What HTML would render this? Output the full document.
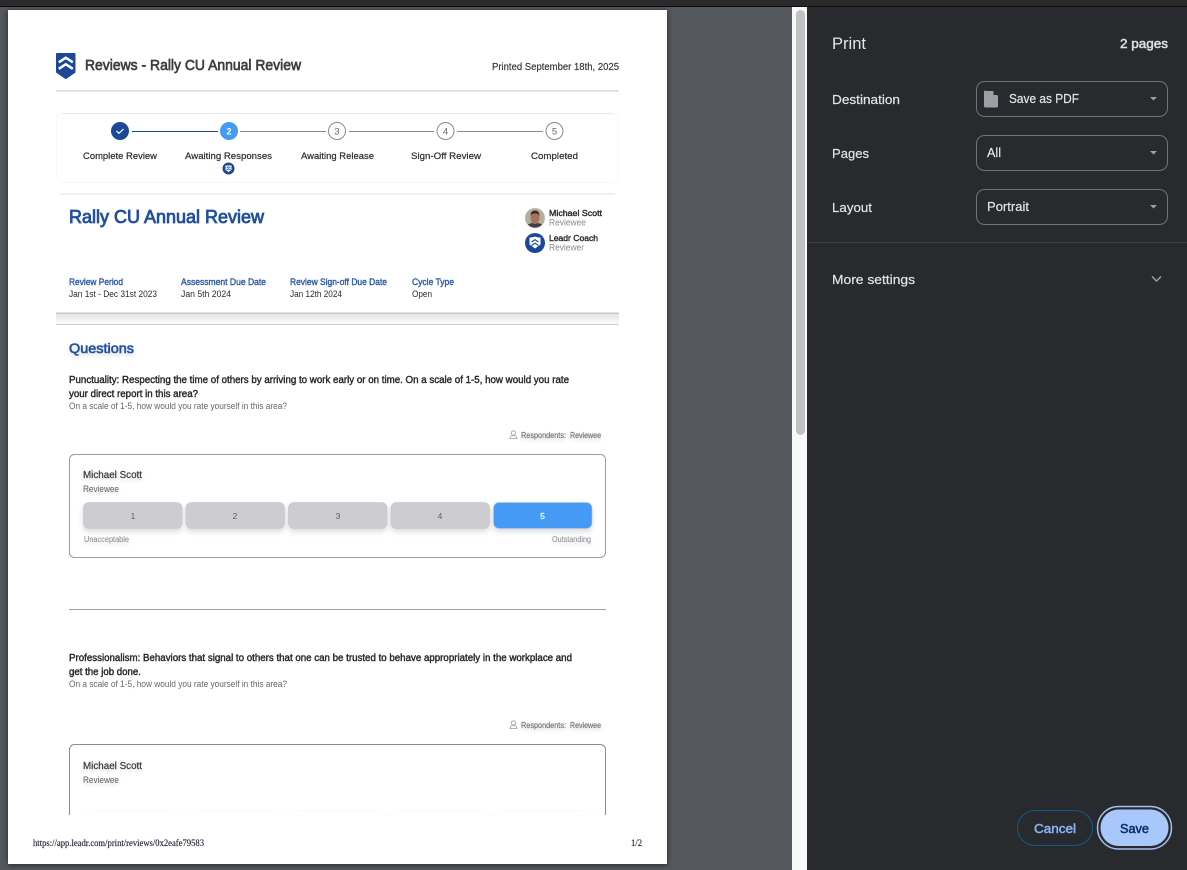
<!DOCTYPE html>
<html lang="en">
<head>
<meta charset="utf-8">
<title>Print - Rally CU Annual Review</title>
<style>
html,body{margin:0;padding:0;width:1187px;height:870px;overflow:hidden;background:#54575c}
svg{display:block}
text{font-family:"Liberation Sans",sans-serif;white-space:pre}
.s{filter:url(#ts)}
.ui{fill:#e3e4e6;stroke:#e3e4e6;stroke-width:.2;font-size:13px}
</style>
</head>
<body>
<svg xmlns="http://www.w3.org/2000/svg" width="1187" height="870" viewBox="0 0 1187 870">
<defs>
<filter id="pg" x="-5%" y="-5%" width="110%" height="110%"><feDropShadow dx="0" dy="1" stdDeviation="3" flood-color="#000" flood-opacity=".55"/></filter>
<filter id="ts" x="-10%" y="-60%" width="120%" height="240%"><feDropShadow dx="0" dy="2" stdDeviation="2.200" flood-color="#000" flood-opacity=".16"/></filter>
<filter id="bs" x="-10%" y="-30%" width="120%" height="170%"><feDropShadow dx="0" dy="3" stdDeviation="3" flood-color="#000" flood-opacity=".14"/></filter>
<filter id="soft" x="0" y="0" width="100%" height="100%"><feGaussianBlur stdDeviation=".28"/></filter>
<linearGradient id="band" x1="0" y1="0" x2="0" y2="1"><stop offset="0" stop-color="#e2e2e4"/><stop offset="1" stop-color="#fbfbfb"/></linearGradient>
<clipPath id="pc"><rect x="8" y="10" width="659" height="805"/></clipPath>
<clipPath id="av"><circle cx="535" cy="218" r="10"/></clipPath>
</defs>

<!-- window chrome -->
<rect width="1187" height="870" fill="#54575c"/>
<rect width="1187" height="6" fill="#2a2a2b"/>
<rect y="6" width="1187" height="1" fill="#0c0c0d"/>

<!-- paper -->
<rect x="8" y="10" width="659" height="854" fill="#fff" filter="url(#pg)"/>

<!-- scrollbar -->
<rect x="792" y="7" width="15" height="863" fill="#f8f8f8"/>
<rect x="796" y="10" width="9" height="425" rx="4.500" fill="#c1c1c1"/>

<!-- sidebar -->
<rect x="807" y="7" width="380" height="863" fill="#292a2d"/>
<text x="832" y="49" font-size="16.500" fill="#e3e4e6" textLength="34" lengthAdjust="spacingAndGlyphs">Print</text>
<text x="1120" y="48" font-size="13" fill="#dfe0e2" stroke="#dfe0e2" stroke-width=".5" textLength="48" lengthAdjust="spacingAndGlyphs">2 pages</text>
<text x="832" y="104" class="ui" textLength="68" lengthAdjust="spacingAndGlyphs">Destination</text>
<text x="832" y="158" class="ui" textLength="37" lengthAdjust="spacingAndGlyphs">Pages</text>
<text x="832" y="212" class="ui" textLength="40" lengthAdjust="spacingAndGlyphs">Layout</text>
<g fill="none" stroke="#6f7276">
<rect x="976.500" y="81.500" width="191" height="35" rx="8"/>
<rect x="976.500" y="135.500" width="191" height="35" rx="8"/>
<rect x="976.500" y="189.500" width="191" height="35" rx="8"/>
</g>
<path d="M986 91h7l5 5v10a1.500 1.500 0 0 1-1.500 1.500h-11a1.500 1.500 0 0 1-1.500-1.500v-14a1.500 1.500 0 0 1 1.500-1.500z" fill="#9aa0a6"/>
<path d="M993.500 90.500v4.500h4.500z" fill="#292a2d"/>
<text x="1009" y="103" class="ui" textLength="70" lengthAdjust="spacingAndGlyphs">Save as PDF</text>
<text x="987" y="157" class="ui" textLength="14" lengthAdjust="spacingAndGlyphs">All</text>
<text x="987" y="211" class="ui" textLength="42" lengthAdjust="spacingAndGlyphs">Portrait</text>
<g fill="#9aa0a6">
<path d="M1150 97h7l-3.500 3.500z"/>
<path d="M1150 151h7l-3.500 3.500z"/>
<path d="M1150 205h7l-3.500 3.500z"/>
</g>
<rect x="807" y="242" width="380" height="1" fill="#3c3e41"/>
<text x="832" y="284" class="ui" textLength="83" lengthAdjust="spacingAndGlyphs">More settings</text>
<path d="M1152 276.500l4.500 4.500 4.500-4.500" fill="none" stroke="#9aa0a6" stroke-width="1.500"/>

<!-- buttons -->
<rect x="1017.500" y="810.500" width="75" height="35" rx="17.500" fill="none" stroke="#0b5c8c"/>
<text x="1034" y="833" font-size="13" fill="#8ab4f8" stroke="#8ab4f8" stroke-width=".5" textLength="42" lengthAdjust="spacingAndGlyphs">Cancel</text>
<rect x="1097.500" y="806.500" width="74" height="42.500" rx="21" fill="#292a2d" stroke="#a0c0f0" stroke-width="1.500"/>
<rect x="1100.500" y="809.500" width="68" height="36.500" rx="18" fill="#a8c7fa"/>
<text x="1120" y="833" font-size="13" fill="#0b2e68" stroke="#0b2e68" stroke-width=".5" textLength="29" lengthAdjust="spacingAndGlyphs">Save</text>

<!-- page content -->
<g clip-path="url(#pc)"><g filter="url(#soft)">
<!-- header -->
<path d="M57 53h17.500a1 1 0 0 1 1 1v18.500l-9.700 6.700-9.800-6.700v-18.500a1 1 0 0 1 1-1z" fill="#1f4a97"/>
<path d="M58.800 62.300l7-4.600 7 4.600M58.800 68.800l7-4.600 7 4.600" fill="none" stroke="#fff" stroke-width="2.500"/>
<text x="85" y="70" font-size="14.500" fill="#3d3d40" stroke="#3d3d40" stroke-width=".65" textLength="216" lengthAdjust="spacingAndGlyphs">Reviews - Rally CU Annual Review</text>
<text x="492" y="70" font-size="10" fill="#333" stroke="#333" stroke-width=".15" textLength="127" lengthAdjust="spacingAndGlyphs">Printed September 18th, 2025</text>
<rect x="56" y="90" width="563" height="1.500" fill="#d9d9d9"/>

<!-- stepper -->
<rect x="56.500" y="113.500" width="562" height="69" rx="6" fill="#fff" stroke="#f8f8f8"/>
<rect x="62" y="113" width="551" height="1" fill="#e9e9e9"/>
<rect x="132" y="131" width="86" height="1" fill="#1f4a97"/>
<rect x="240" y="131" width="86" height="1" fill="#888"/>
<rect x="349" y="131" width="85" height="1" fill="#888"/>
<rect x="457" y="131" width="86" height="1" fill="#888"/>
<circle cx="120" cy="131" r="9" fill="#1f4a97"/>
<path d="M116.500 131l2.500 2.300 4.500-4.300" fill="none" stroke="#fff" stroke-width="1.200"/>
<circle cx="229" cy="131" r="9" fill="#459af5"/>
<text x="229" y="134.500" font-size="9" font-weight="bold" fill="#fff" text-anchor="middle">2</text>
<g fill="#fff" stroke="#8b8b8b" stroke-width="1">
<circle cx="337" cy="131" r="8.500"/>
<circle cx="445.500" cy="131" r="8.500"/>
<circle cx="554.500" cy="131" r="8.500"/>
</g>
<g font-size="9.500" fill="#666" text-anchor="middle">
<text x="337" y="134.500">3</text>
<text x="445.500" y="134.500">4</text>
<text x="554.500" y="134.500">5</text>
</g>
<g font-size="9.500" fill="#2e2e30" stroke="#2e2e30" stroke-width=".22">
<text x="83" y="159" textLength="74" lengthAdjust="spacingAndGlyphs">Complete Review</text>
<text x="185" y="159" textLength="87" lengthAdjust="spacingAndGlyphs">Awaiting Responses</text>
<text x="301" y="159" textLength="73" lengthAdjust="spacingAndGlyphs">Awaiting Release</text>
<text x="411" y="159" textLength="70" lengthAdjust="spacingAndGlyphs">Sign-Off Review</text>
<text x="531" y="159" textLength="47" lengthAdjust="spacingAndGlyphs">Completed</text>
</g>
<circle cx="228.500" cy="168.500" r="6" fill="#1f4a97"/>
<path d="M225.500 165.500h6v4.500l-3 2-3-2z" fill="#fff"/>
<path d="M226.500 168l2-1.300 2 1.300M226.500 170l2-1.300 2 1.300" fill="none" stroke="#1f4a97" stroke-width=".8"/>

<!-- review card -->
<rect x="56" y="313" width="563" height="11" fill="url(#band)"/>
<rect x="56" y="324" width="563" height="1" fill="#cfcfd2"/>
<rect x="60" y="193.500" width="555" height="1" fill="#e3e3e3"/>
<rect x="56" y="312.500" width="563" height="1.200" fill="#bfc0c5"/>
<text x="69" y="223" font-size="18.500" fill="#24509f" stroke="#24509f" stroke-width=".85" textLength="195" lengthAdjust="spacingAndGlyphs">Rally CU Annual Review</text>

<g clip-path="url(#av)">
<rect x="525" y="208" width="20" height="20" fill="#b4ae9f"/>
<path d="M525 230c1-6 5-7 10-7s9 1 10 7z" fill="#3c4148"/>
<ellipse cx="535" cy="218" rx="4.500" ry="6" fill="#a8715a"/>
<path d="M530.500 216c0-4 2-5.500 4.500-5.500s4.500 1.500 4.500 5.500c-1-2-2-2.500-4.500-2.500s-3.500.5-4.500 2.500z" fill="#3a2c25"/>
</g>
<circle cx="535" cy="218" r="10" fill="none" stroke="#ddd" stroke-width=".6"/>
<circle cx="535" cy="243" r="10" fill="#1f4a97"/>
<path d="M529.500 237.500c3.500 0 5.500-1 5.500-1s2 1 5.500 1v7l-5.500 4-5.500-4z" fill="#fff"/>
<path d="M531.500 242l3.500-2.300 3.500 2.300M531.500 245.500l3.500-2.300 3.500 2.300" fill="none" stroke="#1f4a97" stroke-width="1.100"/>
<text x="549" y="216" font-size="8.500" fill="#2c2c2e" stroke="#2c2c2e" stroke-width=".4" textLength="53" lengthAdjust="spacingAndGlyphs">Michael Scott</text>
<text x="549" y="225.500" font-size="9" fill="#8b8b90" textLength="37" lengthAdjust="spacingAndGlyphs">Reviewee</text>
<text x="549" y="241" font-size="8.500" fill="#2c2c2e" stroke="#2c2c2e" stroke-width=".4" textLength="49" lengthAdjust="spacingAndGlyphs">Leadr Coach</text>
<text x="549" y="250.500" font-size="9" fill="#8b8b90" textLength="35" lengthAdjust="spacingAndGlyphs">Reviewer</text>

<g font-size="8.800" fill="#2f5cab" stroke="#2f5cab" stroke-width=".38">
<text x="69" y="285" textLength="54" lengthAdjust="spacingAndGlyphs">Review Period</text>
<text x="181" y="285" textLength="85" lengthAdjust="spacingAndGlyphs">Assessment Due Date</text>
<text x="290" y="285" textLength="97" lengthAdjust="spacingAndGlyphs">Review Sign-off Due Date</text>
<text x="412" y="285" textLength="42" lengthAdjust="spacingAndGlyphs">Cycle Type</text>
</g>
<g font-size="9" fill="#2b2b2b">
<text x="69" y="297" textLength="88" lengthAdjust="spacingAndGlyphs">Jan 1st - Dec 31st 2023</text>
<text x="181" y="297" textLength="50" lengthAdjust="spacingAndGlyphs">Jan 5th 2024</text>
<text x="290" y="297" textLength="52" lengthAdjust="spacingAndGlyphs">Jan 12th 2024</text>
<text x="412" y="297" textLength="20" lengthAdjust="spacingAndGlyphs">Open</text>
</g>

<!-- questions -->
<text x="69" y="353" font-size="14" fill="#24509f" stroke="#24509f" stroke-width=".6" class="s" textLength="65" lengthAdjust="spacingAndGlyphs">Questions</text>

<!-- q1 -->
<g font-size="10" fill="#2a2a2c" stroke="#2a2a2c" stroke-width=".42">
<text x="69" y="383" textLength="500" lengthAdjust="spacingAndGlyphs">Punctuality: Respecting the time of others by arriving to work early or on time. On a scale of 1-5, how would you rate</text>
<text x="69" y="397" textLength="129" lengthAdjust="spacingAndGlyphs">your direct report in this area?</text>
</g>
<text x="69" y="409" font-size="9" fill="#666" textLength="218" lengthAdjust="spacingAndGlyphs">On a scale of 1-5, how would you rate yourself in this area?</text>

<circle cx="513.500" cy="433" r="2.200" fill="none" stroke="#9a9aa0" stroke-width=".8"/>
<path d="M510 438.500c0-2.500 1.500-3 3.500-3s3.500.5 3.500 3z" fill="none" stroke="#9a9aa0" stroke-width=".8"/>
<g font-size="8" fill="#77777c" stroke="#77777c" stroke-width=".2" class="s">
<text x="521" y="438" textLength="45" lengthAdjust="spacingAndGlyphs">Respondents:</text>
<text x="570" y="438" textLength="31" lengthAdjust="spacingAndGlyphs">Reviewee</text>
</g>

<rect x="69.500" y="454.500" width="536" height="103" rx="5" fill="#fff" stroke="#9a9ab0"/>
<text x="83" y="478" font-size="10" fill="#38383b" stroke="#38383b" stroke-width=".2" class="s" textLength="59" lengthAdjust="spacingAndGlyphs">Michael Scott</text>
<text x="83" y="492" font-size="9" fill="#5f5f64" class="s" textLength="36" lengthAdjust="spacingAndGlyphs">Reviewee</text>
<g fill="#cdcdd1" stroke="#c2c2c7" stroke-width=".6" filter="url(#bs)">
<rect x="83.500" y="502.500" width="98.500" height="26" rx="5.500"/>
<rect x="186" y="502.500" width="98.500" height="26" rx="5.500"/>
<rect x="288.500" y="502.500" width="98.500" height="26" rx="5.500"/>
<rect x="391" y="502.500" width="98.500" height="26" rx="5.500"/>
<rect x="493.500" y="502.500" width="98.500" height="26" rx="5.500" fill="#459af5"/>
</g>
<g font-size="8.500" fill="#5f5f64" text-anchor="middle">
<text x="133" y="519">1</text>
<text x="235" y="519">2</text>
<text x="338" y="519">3</text>
<text x="440" y="519">4</text>
<text x="542.500" y="519" fill="#fff" stroke="#fff" stroke-width=".25">5</text>
</g>
<text x="84" y="542" font-size="8" fill="#86868c" class="s" textLength="45" lengthAdjust="spacingAndGlyphs">Unacceptable</text>
<text x="552" y="542" font-size="8" fill="#86868c" class="s" textLength="39" lengthAdjust="spacingAndGlyphs">Outstanding</text>

<rect x="69" y="609" width="537" height="1" fill="#a0a0a3"/>

<!-- q2 -->
<g font-size="10" fill="#2a2a2c" stroke="#2a2a2c" stroke-width=".42">
<text x="69" y="661" textLength="503" lengthAdjust="spacingAndGlyphs">Professionalism: Behaviors that signal to others that one can be trusted to behave appropriately in the workplace and</text>
<text x="69" y="675" textLength="72" lengthAdjust="spacingAndGlyphs">get the job done.</text>
</g>
<text x="69" y="687" font-size="9" fill="#666" textLength="218" lengthAdjust="spacingAndGlyphs">On a scale of 1-5, how would you rate yourself in this area?</text>

<circle cx="513.500" cy="723" r="2.200" fill="none" stroke="#9a9aa0" stroke-width=".8"/>
<path d="M510 728.500c0-2.500 1.500-3 3.500-3s3.500.5 3.500 3z" fill="none" stroke="#9a9aa0" stroke-width=".8"/>
<g font-size="8" fill="#77777c" stroke="#77777c" stroke-width=".2" class="s">
<text x="521" y="728" textLength="45" lengthAdjust="spacingAndGlyphs">Respondents:</text>
<text x="570" y="728" textLength="31" lengthAdjust="spacingAndGlyphs">Reviewee</text>
</g>

<rect x="69.500" y="744.500" width="536" height="103" rx="5" fill="#fff" stroke="#8b8b90"/>
<text x="83" y="769" font-size="10" fill="#38383b" stroke="#38383b" stroke-width=".2" class="s" textLength="59" lengthAdjust="spacingAndGlyphs">Michael Scott</text>
<text x="83" y="783" font-size="9" fill="#5f5f64" class="s" textLength="36" lengthAdjust="spacingAndGlyphs">Reviewee</text>
<g fill="#fff" filter="url(#bs)">
<rect x="83.500" y="812" width="98.500" height="26" rx="5.500"/>
<rect x="186" y="812" width="98.500" height="26" rx="5.500"/>
<rect x="288.500" y="812" width="98.500" height="26" rx="5.500"/>
<rect x="391" y="812" width="98.500" height="26" rx="5.500"/>
<rect x="493.500" y="812" width="98.500" height="26" rx="5.500"/>
</g>
</g></g>

<!-- print footer -->
<text x="33" y="846" font-size="9.500" fill="#1c2230" stroke="#1c2230" stroke-width=".15" style="font-family:'Liberation Serif',serif" textLength="171" lengthAdjust="spacingAndGlyphs">https://app.leadr.com/print/reviews/0x2eafe79583</text>
<text x="631" y="846" font-size="9.500" fill="#1c2230" stroke="#1c2230" stroke-width=".15" style="font-family:'Liberation Serif',serif" textLength="11" lengthAdjust="spacingAndGlyphs">1/2</text>
</svg>
</body>
</html>
